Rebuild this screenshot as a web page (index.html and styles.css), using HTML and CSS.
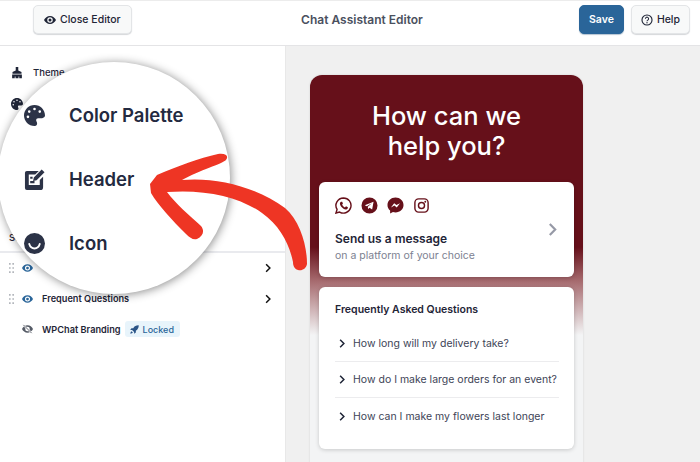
FILE: index.html
```html
<html>
  <head>
    <link rel="stylesheet" href="styles.css">
  </head>
  <body>
    <svg class="sprite" width="0" height="0">
      <symbol id="eye" viewBox="0 0 24 16">
        <path fill-rule="evenodd" d="M12 0C6.500 0 2.200 3.400 0 8c2.200 4.600 6.500 8 12 8s9.800-3.400 12-8c-2.200-4.600-6.500-8-12-8zm0 2.500a5.500 5.500 0 1 1 0 11 5.500 5.500 0 0 1 0-11zm0 2.500a3 3 0 1 0 0 6 3 3 0 0 0 0-6z"/>
      </symbol>
      <symbol id="palette" viewBox="0 0 512 512">
        <path d="M512 256c0 .9 0 1.800 0 2.700c-.4 36.500-33.600 61.300-70.100 61.300H344c-26.500 0-48 21.500-48 48c0 3.400 .4 6.700 1 9.900c2.100 10.200 6.500 20 10.800 29.900c6.100 13.800 12.100 27.500 12.100 42c0 31.800-21.600 60.700-53.400 62c-3.500 .1-7 .2-10.600 .2C114.600 512 0 397.400 0 256S114.600 0 256 0S512 114.600 512 256zM128 288a32 32 0 1 0 -64 0 32 32 0 1 0 64 0zm0-96a32 32 0 1 0 0-64 32 32 0 1 0 0 64zM288 96a32 32 0 1 0 -64 0 32 32 0 1 0 64 0zm96 96a32 32 0 1 0 0-64 32 32 0 1 0 0 64z"/>
      </symbol>
      <symbol id="chevron" viewBox="0 0 8 12">
        <path d="M1.500 1l5 5-5 5" fill="none" stroke="currentColor" stroke-width="2"/>
      </symbol>
      <symbol id="grip" viewBox="0 0 6 12">
        <path d="M0 0h2v2H0zM4 0h2v2H4zM0 5h2v2H0zM4 5h2v2H4zM0 10h2v2H0zM4 10h2v2H4z"/>
      </symbol>
    </svg>

    <header class="topbar">
      <div class="topbar-left">
        <button class="btn"><svg class="btn-eye"><use href="#eye"/></svg>Close Editor</button>
      </div>
      <div class="topbar-title">Chat Assistant Editor</div>
      <div class="topbar-right">
        <button class="btn btn-save">Save</button>
        <button class="btn btn-plain">
          <svg class="btn-help" viewBox="0 0 16 16"><circle cx="8" cy="8" r="6.700" fill="none" stroke="currentColor" stroke-width="1.500"/><path d="M5.900 6.300a2.100 2.100 0 1 1 3.200 1.800c-.8.500-1.100.9-1.100 1.500" fill="none" stroke="currentColor" stroke-width="1.400"/><circle cx="8" cy="11.600" r=".9" fill="currentColor"/></svg>Help
        </button>
      </div>
    </header>

    <main class="editor">
      <aside class="sidebar">
        <ul class="menu">
          <li class="menu-item">
            <svg class="menu-icon" viewBox="0 0 16 16"><path d="M6.300 0h3.400v4.500l4.300 2V9H2V6.500l4.300-2zM1.500 10h13v5h-3.500v-2.500H10V15H6v-2.500H5V15H1.500z"/></svg>
            Theme
          </li>
          <li class="menu-item"><svg class="menu-icon"><use href="#palette"/></svg></li>
        </ul>
        <div class="section-label">Sections</div>
        <ul class="sections">
          <li class="section-row">
            <svg class="grip"><use href="#grip"/></svg>
            <svg class="row-eye"><use href="#eye"/></svg>
            <span class="row-name"></span>
            <svg class="row-arrow"><use href="#chevron"/></svg>
          </li>
          <li class="section-row">
            <svg class="grip"><use href="#grip"/></svg>
            <svg class="row-eye"><use href="#eye"/></svg>
            <span class="row-name">Frequent Questions</span>
            <svg class="row-arrow"><use href="#chevron"/></svg>
          </li>
          <li class="section-row section-row-locked">
            <svg class="row-eye row-eye-off" viewBox="0 0 24 20"><path d="M12 2C6.500 2 2.200 5.400 0 10c2.200 4.600 6.500 8 12 8s9.800-3.400 12-8c-2.200-4.600-6.500-8-12-8zm0 3a5 5 0 1 1 0 10 5 5 0 0 1 0-10z"/><path d="M3 1l18 18" stroke="#fff" stroke-width="4"/><path d="M3 1l18 18" stroke="#555b66" stroke-width="2"/></svg>
            <span class="row-name">WPChat Branding</span>
            <span class="badge">
              <svg class="badge-icon" viewBox="0 0 12 12"><path d="M11.600.4C8.600.2 6 1.500 4.300 4.200H1.900L.3 6.500h2.500l2.700 2.700v2.500l2.300-1.600V7.700C10.500 6 11.800 3.400 11.600.4zM1.900 8.200c-.9.500-1.300 1.700-1.400 3.300 1.600-.1 2.800-.5 3.300-1.400z"/></svg>
              Locked
            </span>
          </li>
        </ul>
      </aside>

      <section class="preview">
        <div class="phone">
          <h1 class="phone-title">How can we<br>help you?</h1>
          <div class="card message-card">
            <div class="message-text">
              <div class="channels">
                <svg class="channel" viewBox="0 0 18 18"><path d="M9 1a8 8 0 0 0-6.800 12.200L1 17l3.900-1.100A8 8 0 1 0 9 1z" fill="none" stroke="currentColor" stroke-width="1.500"/><path d="M6.400 4.900c-.6.300-1.300 1.100-1.200 2.300.2 2.300 3.200 5.700 6 6 1.200.1 2-.6 2.300-1.300.2-.5.200-.9.100-1l-1.900-1c-.2 0-.8.900-1.100 1.100-1.100-.1-2.900-2-3.100-3 .1-.3.900-.9.900-1.200l-.8-1.900c-.2 0-.8 0-1.200 0z"/></svg>
                <svg class="channel" viewBox="0 0 18 18"><path fill-rule="evenodd" d="M9 .5a8.500 8.500 0 1 1 0 17 8.500 8.500 0 0 1 0-17zM4 8.800l9.300-3.700-1.500 8.100-2.800-1.900-1.500 1.500-.3-2.600 4.300-3.500-5.400 3z"/></svg>
                <svg class="channel" viewBox="0 0 18 18"><path fill-rule="evenodd" d="M9 .5C4.300.5.500 4 .5 8.500c0 2.400 1 4.400 2.800 5.800V17.500l3-1.600c.9.200 1.800.4 2.700.4 4.700 0 8.500-3.400 8.500-7.800S13.700.500 9 .5zM4.200 11l3.400-4.500 2.400 2 3.800-2-3.500 4.500-2.400-2z"/></svg>
                <svg class="channel" viewBox="0 0 18 18"><rect x="2" y="2" width="14" height="14" rx="4" fill="none" stroke="currentColor" stroke-width="1.500"/><circle cx="9" cy="9" r="3.200" fill="none" stroke="currentColor" stroke-width="1.500"/><circle cx="13" cy="5" r="1"/></svg>
              </div>
              <div class="message-title">Send us a message</div>
              <div class="message-sub">on a platform of your choice</div>
            </div>
            <svg class="message-arrow"><use href="#chevron"/></svg>
          </div>
          <div class="card faq-card">
            <div class="faq-title">Frequently Asked Questions</div>
            <ul class="faq-list">
              <li class="faq-item"><svg class="faq-arrow"><use href="#chevron"/></svg>How long will my delivery take?</li>
              <li class="faq-item"><svg class="faq-arrow"><use href="#chevron"/></svg>How do I make large orders for an event?</li>
              <li class="faq-item"><svg class="faq-arrow"><use href="#chevron"/></svg>How can I make my flowers last longer</li>
            </ul>
          </div>
        </div>
      </section>
    </main>

    <!-- callout on top of the screenshot -->
    <div class="magnifier">
      <div class="mag-row"><svg class="mag-icon"><use href="#palette"/></svg>Color Palette</div>
      <div class="mag-row">
        <svg class="mag-icon" viewBox="0 0 22 22"><path d="M3 2h12.500l-3.800 3.800H5v11h11.500v-5.200l3.500-3.400V19a3 3 0 0 1-3 3H3a2 2 0 0 1-2-2V4a2 2 0 0 1 2-2z"/><path d="M18.500.5l3 3-8.300 8.300-3.700.8.800-3.800zM6.500 8H9v2.300H6.500zM6.500 12.500H11v2.300H6.500z"/></svg>
        Header
      </div>
      <div class="mag-row">
        <svg class="mag-icon" viewBox="0 0 22 22"><circle cx="11" cy="11" r="11"/><path d="M5.500 11.500c1 3.300 3.200 4.700 5.500 4.700s4.500-1.400 5.500-4.700" fill="none" stroke="#fff" stroke-width="2" stroke-linecap="round"/></svg>
        Icon
      </div>
    </div>
    <svg class="arrow" viewBox="0 0 700 462">
      <path fill="#ee3524" d="M150 184L157 175C175 167 200 158 218 154C226 153 229 156 226 160C222 164 200 170 182 180C215 177 255 186 285 208C300 221 307 245 307 264C306 269 302 271 298 270C294 269 293 265 293 262C289 243 280 226 262 213C240 197 205 189 167 192C175 203 190 216 201 226C205 231 203 236 197 239C193 240 190 238 186 234C172 220 158 205 151 193Z"/>
    </svg>
  </body>
</html>
```
FILE: styles.css
```css
* {
  box-sizing: border-box;
}

body {
  margin: 0;
  width: 700px;
  height: 462px;
  overflow: hidden;
  font-family: Inter, "Liberation Sans", sans-serif;
  color: #1f2537;
  background-color: #fff;
}

ul {
  margin: 0;
  padding: 0;
  list-style-type: none;
}

.sprite {
  display: block;
}

.topbar {
  height: 46px;
  padding: 4px 0 0;
  display: flex;
  justify-content: space-between;
  border-top: 1px solid #ececec;
  border-bottom: 1px solid #e4e4e6;
}

.topbar-left {
  width: 262px;
  padding-left: 33px;
}

.topbar-right {
  width: 238px;
  padding-right: 10px;
  display: flex;
  justify-content: flex-end;
  gap: 7px;
}

.topbar-title {
  padding-top: 7px;
  font-size: 12px;
  font-weight: 600;
  color: #4a505e;
}

.btn {
  height: 29px;
  padding: 0 10px;
  display: flex;
  align-items: center;
  gap: 4px;
  font-family: inherit;
  font-size: 10.500px;
  font-weight: 500;
  color: #1f2537;
  background-color: #f8f9f9;
  border: 1px solid #e3e5e7;
  border-radius: 5px;
  box-shadow: 0 1px 1px #d5d7da;
}

.btn-plain {
  padding: 0 9px;
}

.btn-eye {
  width: 12px;
  height: 8px;
  fill: currentColor;
}

.btn-help {
  width: 12px;
  height: 12px;
}

.btn-save {
  padding: 0 9px;
  color: #fff;
  font-weight: 600;
  background-color: #2a6599;
  border-color: #2a6599;
  box-shadow: 0 1px 1px #b5c4d2;
}

.editor {
  height: 416px;
  display: flex;
}

.sidebar {
  width: 285px;
  padding-top: 11px;
  flex: none;
  background-color: #fff;
}

.menu {
  height: 174px;
}

.menu-item {
  height: 31px;
  padding-left: 11px;
  display: flex;
  align-items: center;
  gap: 10px;
  font-size: 9.500px;
  font-weight: 500;
}

.menu-icon {
  width: 12px;
  height: 12px;
  fill: currentColor;
}

.section-label {
  padding: 1px 0 0 9px;
  height: 20px;
  font-size: 9.500px;
  font-weight: 500;
}

.sections {
  border-top: 2px solid #e9eaee;
}

.section-row {
  height: 30.500px;
  padding: 0 14px 0 9px;
  display: flex;
  align-items: center;
  font-size: 9.200px;
  font-weight: 600;
}

.section-row-locked {
  padding-left: 22px;
}

.grip {
  width: 5px;
  height: 10px;
  margin-right: 8px;
  fill: #b3b6bc;
}

.row-eye {
  width: 11px;
  height: 8px;
  margin-right: 9px;
  fill: #2a6599;
}

.row-eye-off {
  height: 10px;
  fill: #555b66;
}

.row-name {
  flex: 1;
}

.section-row-locked .row-name {
  flex: none;
}

.row-arrow {
  width: 6px;
  height: 10px;
  color: #111;
}

.badge {
  height: 16px;
  margin-left: 4px;
  padding: 0 6px 0 5px;
  display: flex;
  align-items: center;
  gap: 4px;
  font-size: 9px;
  font-weight: 500;
  color: #2a6599;
  background-color: #e8f4fb;
  border-radius: 3px;
}

.badge-icon {
  width: 9px;
  height: 9px;
  fill: #2a5487;
}

.preview {
  flex: 1;
  padding: 29px 0 0 24px;
  background-color: #f0f0f0;
  border-left: 1px solid #e8e8e8;
}

.phone {
  width: 273px;
  height: 400px;
  padding: 26px 9px 0;
  border-radius: 12px 12px 0 0;
  background: linear-gradient(#66101a 0, #66101a 172px, #a5686c 205px, #f3f4f5 260px);
  box-shadow: 0 0 2px #ccc;
}

.phone-title {
  margin: 0 0 21px;
  height: 60px;
  font-size: 25.500px;
  line-height: 30px;
  font-weight: 500;
  text-align: center;
  color: #fff;
}

.card {
  background-color: #fff;
  border-radius: 6px;
  box-shadow: 0 1px 4px rgba(0, 0, 0, .18);
}

.message-card {
  height: 95px;
  padding: 15px 17px 0 16px;
  display: flex;
  justify-content: space-between;
}

.channels {
  height: 33px;
  display: flex;
  gap: 9px;
  color: #66101a;
}

.channel {
  width: 17px;
  height: 17px;
  fill: #66101a;
}

.message-title {
  font-size: 12px;
  font-weight: 600;
  line-height: 15px;
  margin-top: 1px;
}

.message-sub {
  margin-top: 3px;
  font-size: 10.500px;
  line-height: 14px;
  color: #7c8191;
}

.message-arrow {
  width: 9px;
  height: 13px;
  margin-top: 26px;
  color: #9699a6;
}

.faq-card {
  height: 162px;
  margin-top: 10px;
  padding: 15px 15px 0 16px;
}

.faq-title {
  height: 24px;
  font-size: 10.500px;
  line-height: 15px;
  font-weight: 600;
}

.faq-item {
  height: 36px;
  padding-left: 4px;
  display: flex;
  align-items: center;
  gap: 8px;
  font-size: 10.500px;
  color: #3d4356;
  border-bottom: 1px solid #ececee;
  white-space: nowrap;
}

.faq-item:last-child {
  border-bottom: 0;
}

.faq-arrow {
  width: 6px;
  height: 9px;
  color: #1f2537;
}

.magnifier {
  position: absolute;
  left: -2px;
  top: 62px;
  width: 232px;
  height: 232px;
  padding: 21px 0 0 26px;
  background-color: #fff;
  border-radius: 50%;
  box-shadow: 1px 1px 10px rgba(0, 0, 0, .45);
}

.mag-row {
  height: 64px;
  display: flex;
  align-items: center;
  gap: 24px;
  font-size: 18.500px;
  font-weight: 600;
  color: #232a40;
}

.mag-icon {
  width: 21px;
  height: 21px;
  flex: none;
  fill: #2c3347;
}

.arrow {
  position: absolute;
  left: 0;
  top: 0;
  width: 700px;
  height: 462px;
  pointer-events: none;
}
```
